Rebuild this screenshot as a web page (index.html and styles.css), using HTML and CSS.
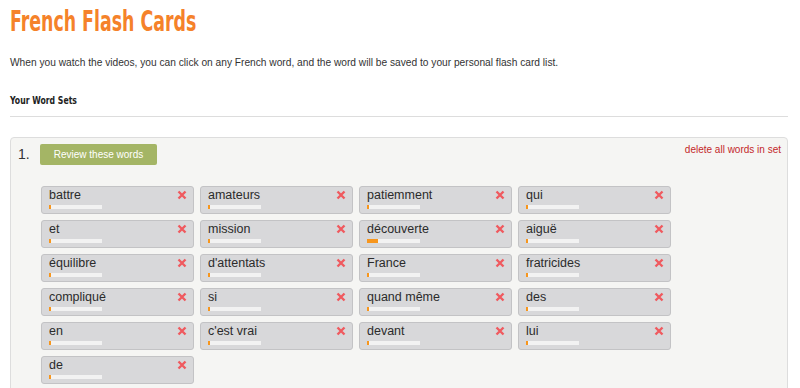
FILE: index.html
```html
<!DOCTYPE html>
<html lang="en">
<head>
  <meta charset="UTF-8">
  <meta name="viewport" content="width=device-width, initial-scale=1.0">
  <title>French Flash Cards</title>
  <link rel="stylesheet" href="styles.css">
</head>
<body>
  <h1 class="page-title">French Flash Cards</h1>
  <p class="intro">When you watch the videos, you can click on any French word, and the word will be saved to your personal flash card list.</p>

  <h3 class="section-title">Your Word Sets</h3>
  <hr class="divider">

  <div class="word-set">
    <div class="set-head">
      <span class="set-num">1.</span>
      <button class="review-btn">Review these words</button>
      <a class="delete-all" href="#">delete all words in set</a>
    </div>

    <div class="cards">
      <div class="card"><span class="word">battre</span><span class="remove"><svg viewBox="0 0 10 10"><path d="M1.5 1.5l7 7M8.5 1.5l-7 7"/></svg></span><div class="bar"><div class="fill" style="width:2px"></div></div></div>
      <div class="card"><span class="word">amateurs</span><span class="remove"><svg viewBox="0 0 10 10"><path d="M1.5 1.5l7 7M8.5 1.5l-7 7"/></svg></span><div class="bar"><div class="fill" style="width:2px"></div></div></div>
      <div class="card"><span class="word">patiemment</span><span class="remove"><svg viewBox="0 0 10 10"><path d="M1.5 1.5l7 7M8.5 1.5l-7 7"/></svg></span><div class="bar"><div class="fill" style="width:2px"></div></div></div>
      <div class="card"><span class="word">qui</span><span class="remove"><svg viewBox="0 0 10 10"><path d="M1.5 1.5l7 7M8.5 1.5l-7 7"/></svg></span><div class="bar"><div class="fill" style="width:2px"></div></div></div>

      <div class="card"><span class="word">et</span><span class="remove"><svg viewBox="0 0 10 10"><path d="M1.5 1.5l7 7M8.5 1.5l-7 7"/></svg></span><div class="bar"><div class="fill" style="width:2px"></div></div></div>
      <div class="card"><span class="word">mission</span><span class="remove"><svg viewBox="0 0 10 10"><path d="M1.5 1.5l7 7M8.5 1.5l-7 7"/></svg></span><div class="bar"><div class="fill" style="width:2px"></div></div></div>
      <div class="card"><span class="word">découverte</span><span class="remove"><svg viewBox="0 0 10 10"><path d="M1.5 1.5l7 7M8.5 1.5l-7 7"/></svg></span><div class="bar"><div class="fill" style="width:11px"></div></div></div>
      <div class="card"><span class="word">aiguë</span><span class="remove"><svg viewBox="0 0 10 10"><path d="M1.5 1.5l7 7M8.5 1.5l-7 7"/></svg></span><div class="bar"><div class="fill" style="width:2px"></div></div></div>

      <div class="card"><span class="word">équilibre</span><span class="remove"><svg viewBox="0 0 10 10"><path d="M1.5 1.5l7 7M8.5 1.5l-7 7"/></svg></span><div class="bar"><div class="fill" style="width:2px"></div></div></div>
      <div class="card"><span class="word">d'attentats</span><span class="remove"><svg viewBox="0 0 10 10"><path d="M1.5 1.5l7 7M8.5 1.5l-7 7"/></svg></span><div class="bar"><div class="fill" style="width:2px"></div></div></div>
      <div class="card"><span class="word">France</span><span class="remove"><svg viewBox="0 0 10 10"><path d="M1.5 1.5l7 7M8.5 1.5l-7 7"/></svg></span><div class="bar"><div class="fill" style="width:2px"></div></div></div>
      <div class="card"><span class="word">fratricides</span><span class="remove"><svg viewBox="0 0 10 10"><path d="M1.5 1.5l7 7M8.5 1.5l-7 7"/></svg></span><div class="bar"><div class="fill" style="width:2px"></div></div></div>

      <div class="card"><span class="word">compliqué</span><span class="remove"><svg viewBox="0 0 10 10"><path d="M1.5 1.5l7 7M8.5 1.5l-7 7"/></svg></span><div class="bar"><div class="fill" style="width:2px"></div></div></div>
      <div class="card"><span class="word">si</span><span class="remove"><svg viewBox="0 0 10 10"><path d="M1.5 1.5l7 7M8.5 1.5l-7 7"/></svg></span><div class="bar"><div class="fill" style="width:2px"></div></div></div>
      <div class="card"><span class="word">quand même</span><span class="remove"><svg viewBox="0 0 10 10"><path d="M1.5 1.5l7 7M8.5 1.5l-7 7"/></svg></span><div class="bar"><div class="fill" style="width:2px"></div></div></div>
      <div class="card"><span class="word">des</span><span class="remove"><svg viewBox="0 0 10 10"><path d="M1.5 1.5l7 7M8.5 1.5l-7 7"/></svg></span><div class="bar"><div class="fill" style="width:2px"></div></div></div>

      <div class="card"><span class="word">en</span><span class="remove"><svg viewBox="0 0 10 10"><path d="M1.5 1.5l7 7M8.5 1.5l-7 7"/></svg></span><div class="bar"><div class="fill" style="width:2px"></div></div></div>
      <div class="card"><span class="word">c'est vrai</span><span class="remove"><svg viewBox="0 0 10 10"><path d="M1.5 1.5l7 7M8.5 1.5l-7 7"/></svg></span><div class="bar"><div class="fill" style="width:2px"></div></div></div>
      <div class="card"><span class="word">devant</span><span class="remove"><svg viewBox="0 0 10 10"><path d="M1.5 1.5l7 7M8.5 1.5l-7 7"/></svg></span><div class="bar"><div class="fill" style="width:2px"></div></div></div>
      <div class="card"><span class="word">lui</span><span class="remove"><svg viewBox="0 0 10 10"><path d="M1.5 1.5l7 7M8.5 1.5l-7 7"/></svg></span><div class="bar"><div class="fill" style="width:2px"></div></div></div>

      <div class="card"><span class="word">de</span><span class="remove"><svg viewBox="0 0 10 10"><path d="M1.5 1.5l7 7M8.5 1.5l-7 7"/></svg></span><div class="bar"><div class="fill" style="width:2px"></div></div></div>
    </div>
  </div>
</body>
</html>
```

FILE: styles.css
```css
body {
  margin: 0;
  padding: 0 12px 0 10px;
  font-family: "Liberation Sans", Arial, sans-serif;
  color: #333;
  background: #fff;
}
/* the original uses a condensed display face; squeeze DejaVu Condensed to match */
.page-title {
  margin: 0;
  padding-top: 6px;
  font-family: "DejaVu Sans Condensed", sans-serif;
  font-size: 28px;
  line-height: 32px;
  font-weight: bold;
  color: #f5822a;
  transform: scaleX(0.69);
  transform-origin: left center;
  white-space: nowrap;
}
.intro {
  margin: 18px 0 0;
  font-size: 10.2px;
  line-height: 14px;
}
.section-title {
  margin: 23px 0 0;
  font-family: "DejaVu Sans Condensed", sans-serif;
  font-size: 10.5px;
  line-height: 14px;
  font-weight: bold;
  color: #222;
  transform: scaleX(0.82);
  transform-origin: left center;
}
.divider {
  margin: 9px 0 0;
  border: none;
  border-top: 1px solid #ddd;
}
.word-set {
  margin-top: 20px;
  background: #f5f5f3;
  border: 1px solid #ddd;
  border-radius: 4px;
  padding: 6px 6px 10px 7px;
  height: 300px;
}
.set-head {
  display: flex;
  align-items: flex-start;
}
.set-num {
  font-size: 14px;
  line-height: 21px;
  width: 22px;
}
.review-btn {
  width: 117px;
  height: 21px;
  padding: 0;
  border: none;
  border-radius: 2px;
  background: #a4b565;
  color: #fff;
  font-family: "Liberation Sans", Arial, sans-serif;
  font-size: 10px;
  cursor: pointer;
}
.delete-all {
  margin-left: auto;
  margin-top: 0;
  font-size: 10px;
  color: #c4282a;
  text-decoration: none;
}
.cards {
  display: grid;
  grid-template-columns: repeat(4, 153px);
  grid-auto-rows: 28px;
  gap: 6px;
  margin: 21px 0 0 23px;
}
.card {
  position: relative;
  box-sizing: border-box;
  background: #d8d8da;
  border: 1px solid #c3c3c5;
  border-radius: 3px;
  padding: 1px 7px 0;
}
.word {
  display: block;
  font-size: 12.5px;
  line-height: 15px;
  color: #2b2b2b;
}
.remove {
  position: absolute;
  top: 3px;
  right: 6px;
  width: 10px;
  height: 10px;
}
.remove svg {
  display: block;
  width: 10px;
  height: 10px;
  fill: none;
  stroke: #ef5a5f;
  stroke-width: 2.4;
}
.bar {
  margin-top: 2px;
  width: 53px;
  height: 4px;
  background: #f2f2f2;
}
.fill {
  height: 4px;
  background: #f7961d;
}
```
